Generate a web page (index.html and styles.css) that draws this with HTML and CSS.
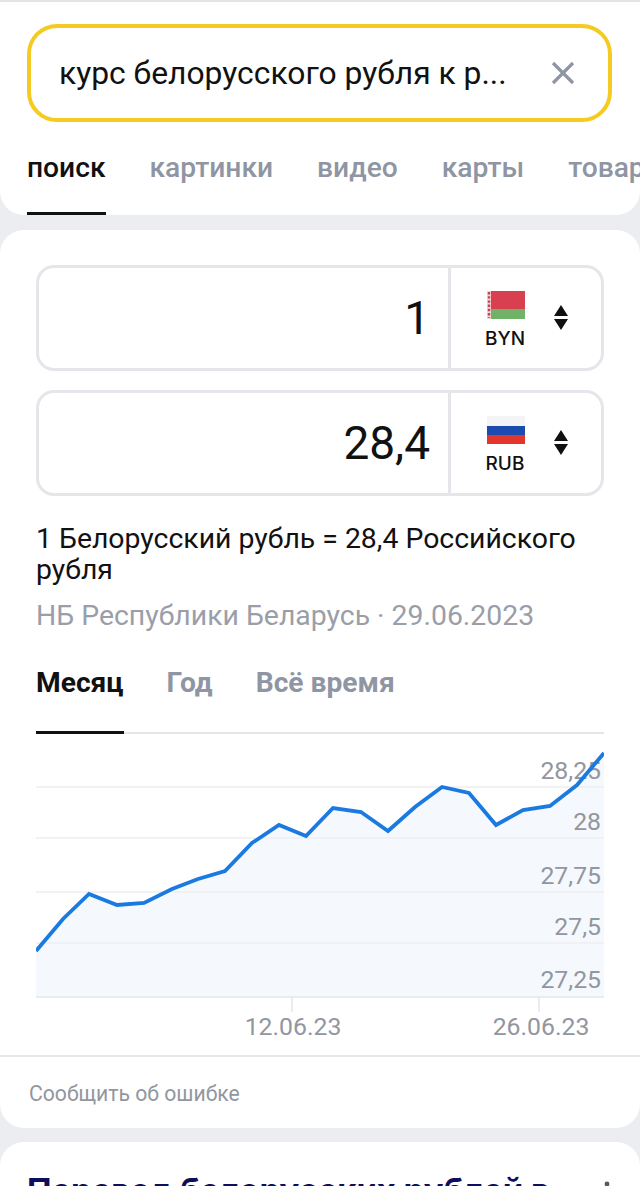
FILE: index.html
```html
<!DOCTYPE html>
<html>
  <head>
    <meta charset="utf-8">
    <title>курс белорусского рубля</title>
    <link rel="stylesheet" href="styles.css">
  </head>
  <body>
    <div class="header card">
      <div class="search">
        <span class="search-text">курс белорусского рубля к р...</span>
        <svg class="clear" width="26" height="26" viewBox="0 0 26 26">
          <path d="M3 3L23 23M23 3L3 23" stroke="#8f95a3" stroke-width="3.2" fill="none"/>
        </svg>
      </div>
      <div class="tabs">
        <span class="tab active">поиск</span>
        <span class="tab">картинки</span>
        <span class="tab">видео</span>
        <span class="tab">карты</span>
        <span class="tab">товары</span>
      </div>
    </div>

    <div class="converter card">
      <div class="inner">
        <div class="row">
          <div class="amount">1</div>
          <div class="currency">
            <div class="code-box">
              <svg class="flag" width="38" height="28" viewBox="0 0 38 28">
                <rect width="38" height="28" fill="#fff"/>
                <rect x="4" width="34" height="18" fill="#d8404f"/>
                <rect x="4" y="18" width="34" height="10" fill="#6fb268"/>
                <path d="M0 0H4V28H0Z" fill="#f3d5d8"/>
                <path d="M2 1V27" stroke="#c9404f" stroke-width="2.4" stroke-dasharray="2.4 1.8"/>
              </svg>
              <span class="code">BYN</span>
            </div>
            <svg class="updown" width="14" height="25" viewBox="0 0 14 25">
              <path d="M7 0L14 11H0ZM0 14H14L7 25Z" fill="#111"/>
            </svg>
          </div>
        </div>
        <div class="row">
          <div class="amount">28,4</div>
          <div class="currency">
            <div class="code-box">
              <svg class="flag" width="38" height="28" viewBox="0 0 38 28">
                <rect width="38" height="10" fill="#f4f4f6"/>
                <rect y="10" width="38" height="9" fill="#1c4bb0"/>
                <rect y="19" width="38" height="9" fill="#e0362c"/>
              </svg>
              <span class="code">RUB</span>
            </div>
            <svg class="updown" width="14" height="25" viewBox="0 0 14 25">
              <path d="M7 0L14 11H0ZM0 14H14L7 25Z" fill="#111"/>
            </svg>
          </div>
        </div>

        <div class="rate">1 Белорусский рубль = 28,4 Российского рубля</div>
        <div class="source">НБ Республики Беларусь · 29.06.2023</div>

        <div class="periods">
          <span class="period active">Месяц</span>
          <span class="period">Год</span>
          <span class="period">Всё время</span>
        </div>

        <svg class="chart" width="568" height="323" viewBox="36 733 568 323">
          <path class="area" d="M36 951L63 919L89 894L117 905L144 903L172 889L198 879L225 871L252 843L279 825L306 836L333 808L361 812L388 831L415 807L442 787L469 793L496 825L523 810L550 806L577 785L604 753V997H36Z"/>
          <path class="grid" d="M36 787H604M36 838H604M36 892H604M36 943H604"/>
          <path class="axis" d="M36 997H604M292 997V1012M539 997V1012"/>
          <g class="y-labels">
            <text x="601" y="779">28,25</text>
            <text x="601" y="830">28</text>
            <text x="601" y="884">27,75</text>
            <text x="601" y="935">27,5</text>
            <text x="601" y="988">27,25</text>
          </g>
          <path class="line" d="M36 951L63 919L89 894L117 905L144 903L172 889L198 879L225 871L252 843L279 825L306 836L333 808L361 812L388 831L415 807L442 787L469 793L496 825L523 810L550 806L577 785L604 753"/>
          <g class="x-labels">
            <text x="293" y="1035">12.06.23</text>
            <text x="541" y="1035">26.06.23</text>
          </g>
        </svg>
      </div>
      <div class="report">Сообщить об ошибке</div>
    </div>

    <div class="result card">
      <div class="result-title">Перевод белорусских рублей в</div>
      <svg class="more" width="6" height="26" viewBox="0 0 6 26">
        <circle cx="3" cy="4" r="2.4" fill="#555a66"/>
        <circle cx="3" cy="13" r="2.4" fill="#555a66"/>
        <circle cx="3" cy="22" r="2.4" fill="#555a66"/>
      </svg>
    </div>
  </body>
</html>
```

FILE: styles.css
```css
html,
body {
  height: 1186px;
  overflow: hidden;
}
body {
  margin: 0;
  background-color: #ebedf1;
  font-family: "Roboto", sans-serif;
  color: #111;
}
.card {
  background-color: #fff;
  border-radius: 24px;
}

.header {
  height: 213px;
  border-top: 2px solid #e3e4e7;
  border-radius: 0 0 24px 24px;
  overflow: hidden;
}
.search {
  margin: 22px 28px 0 27px;
  height: 90px;
  border: 4px solid #f5cb22;
  border-radius: 30px;
  display: flex;
  align-items: center;
  justify-content: space-between;
  padding: 0 32px 0 29px;
}
.search-text {
  font-size: 31.8px;
  color: #111;
  margin-left: -1px;
}
.tabs {
  display: flex;
  gap: 44px;
  margin: 24px 0 0 27px;
  white-space: nowrap;
}
.tab {
  font-size: 28.2px;
  font-weight: 500;
  color: #8f95a3;
  height: 69px;
  line-height: 44px;
  box-sizing: border-box;
}
.active {
  color: #111;
  border-bottom: 3px solid #111;
}

.converter {
  margin-top: 15px;
  height: 898px;
}
.inner {
  padding: 35px 36px 0;
}
.row {
  display: flex;
  height: 106px;
  box-sizing: border-box;
  border: 3px solid #e4e6ea;
  border-radius: 18px;
  margin-bottom: 19px;
}
.amount {
  flex: 1;
  text-align: right;
  font-size: 46px;
  line-height: 100px;
  padding-right: 18px;
}
.currency {
  width: 153px;
  box-sizing: border-box;
  border-left: 3px solid #e4e6ea;
  display: flex;
  align-items: center;
  padding-left: 34px;
}
.code-box {
  display: flex;
  flex-direction: column;
  align-items: center;
  width: 40px;
  margin-right: 29px;
  padding-top: 6px;
}
.flag {
  display: block;
  margin-left: 1px;
}
.code {
  font-family: "Inter", sans-serif;
  font-size: 19px;
  font-weight: 500;
  line-height: 24px;
  margin-top: 8px;
}
.updown {
  margin-bottom: 1px;
}

.rate {
  font-size: 28.4px;
  line-height: 31px;
  margin-top: 27px;
}
.source {
  font-size: 28.4px;
  line-height: 31px;
  color: #9a9ea8;
  margin-top: 15px;
}
.periods {
  display: flex;
  gap: 43px;
  margin-top: 34px;
  height: 67px;
  border-bottom: 2px solid #e4e6ea;
}
.period {
  font-size: 28.2px;
  font-weight: 700;
  color: #8f95a3;
  line-height: 36px;
  box-sizing: border-box;
  height: 69px;
}
.period.active {
  color: #111;
}

.chart {
  display: block;
  margin-top: -1px;
}
.area {
  fill: #f5f9fe;
}
.grid {
  stroke: #edeef1;
  stroke-width: 1.5;
  fill: none;
}
.axis {
  stroke: #e4e6ea;
  stroke-width: 1.5;
  fill: none;
}
.line {
  stroke: #1a7ae0;
  stroke-width: 3.8;
  fill: none;
}
.y-labels text,
.x-labels text {
  font-size: 24.8px;
  fill: #92969f;
}
.y-labels text {
  text-anchor: end;
}
.x-labels text {
  text-anchor: middle;
}

.report {
  border-top: 2px solid #e6e7ea;
  margin-top: -1px;
  padding: 24px 0 0 29px;
  font-size: 21.2px;
  line-height: 25px;
  color: #92969f;
}

.result {
  margin-top: 14px;
  height: 44px;
  overflow: hidden;
  display: flex;
  justify-content: space-between;
  padding: 0 30px 0 27px;
  border-radius: 24px 24px 0 0;
}
.result-title {
  font-family: "Inter", sans-serif;
  font-size: 32.8px;
  font-weight: 700;
  line-height: 40px;
  margin-top: 28px;
  color: #0b0f5c;
  white-space: nowrap;
}
.more {
  margin-top: 38px;
}
```
